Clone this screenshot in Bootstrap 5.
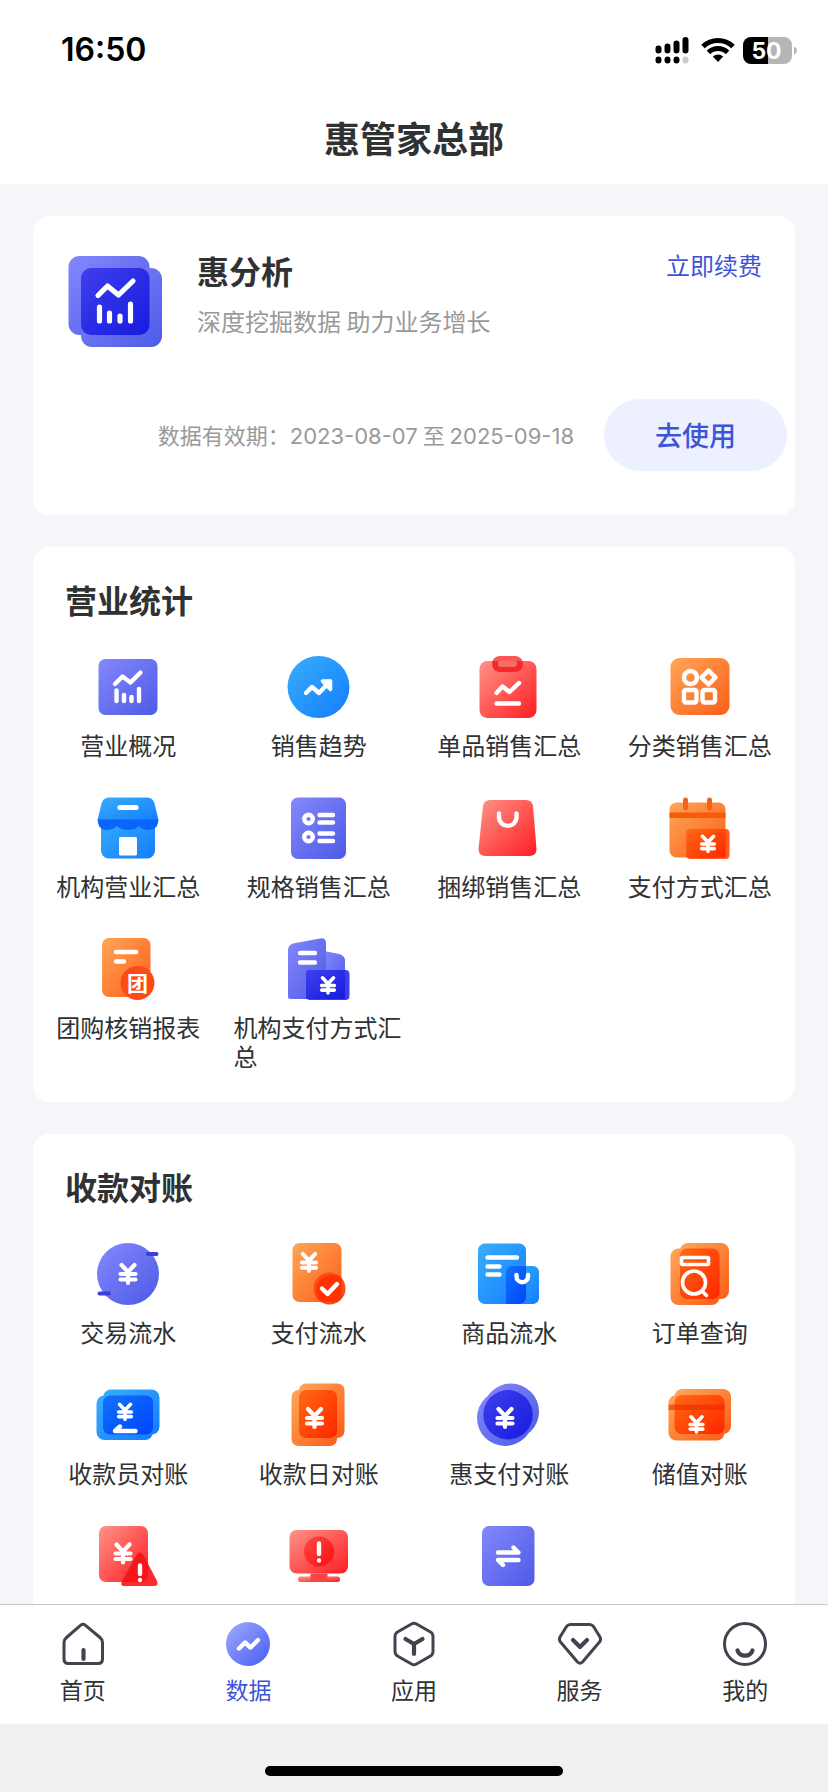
<!DOCTYPE html>
<html lang="zh-CN">
<head>
<meta charset="utf-8">
<meta name="viewport" content="width=device-width, initial-scale=1">
<title>惠管家总部</title>
<link rel="stylesheet" href="https://cdn.jsdelivr.net/npm/bootstrap@5.3.0/dist/css/bootstrap.min.css">
<style>
  :root { --brand: #3f55d8; --ink: #303133; --muted: #999; --page: #f5f6fa; }
  body { font-family: "Noto Sans CJK SC", sans-serif; color: var(--ink); background: var(--page); font-size: 24px; line-height: 29px; }
  a { color: inherit; text-decoration: none; }
  .status-bar { padding: 32px 31px 32px 61px; font-family: Inter, sans-serif; }
  .clock { font-size: 32px; line-height: 36px; font-weight: 600; color: #000; }
  .page-title { font-size: 36px; line-height: 44px; padding: 15px 0 25px; }
  .scroller { min-height: 0; gap: 32px; padding: 32px 33px; scrollbar-width: none; }
  .scroller::-webkit-scrollbar { display: none; }
  .panel { flex: none; background: #fff; border-radius: 16px; }
  .panel-title { font-size: 32px; line-height: 40px; }
  .promo { padding: 34px 8px 44px 35px; }
  .promo-top { gap: 35px; padding-right: 25px; }
  .promo-logo { width: 94px; height: 91px; margin-top: 6px; }
  .promo-sub { line-height: 36px; margin-top: 13px; color: var(--muted); }
  .promo-link, .promo-link:hover { color: var(--brand); line-height: 30px; }
  .promo-foot { gap: 30px; margin-top: 52px; }
  .validity { font-size: 22px; line-height: 30px; color: var(--muted); white-space: nowrap; }
  .validity time { font-family: Inter, sans-serif; }
  .btn-use { --bs-btn-bg: #ecf0ff; --bs-btn-color: var(--brand); --bs-btn-hover-bg: #dfe6ff; --bs-btn-hover-color: var(--brand);
    font-size: 27px; line-height: 40px; font-weight: 500; padding: 16px 51px; }
  .menu-panel { padding: 32px 0; }
  .menu-panel .panel-title { padding-left: 32px; margin-bottom: 36px; }
  .menu-grid { row-gap: 37px; }
  .menu-item { gap: 11px; padding: 0 10px; }
  .menu-item svg { width: 64px; height: 64px; flex: none; }
  .tab-bar { background: #fff; border-top: 1px solid #c8c8cb; padding: 15px 0 20px; font-size: 23px; line-height: 30px; }
  .tab-item { gap: 6px; }
  .tab-item.active { color: var(--brand); }
  .tab-item svg { width: 48px; height: 48px; }
  .home-area { background: #f1f1f1; padding: 42px 0 16px; }
  .home-pill { width: 36%; height: 10px; border-radius: 5px; background: #000; }
  .w { fill: none; stroke: #fff; stroke-width: 4.4; stroke-linecap: round; stroke-linejoin: round; }
  .w.thick { stroke-width: 5.2; }
  .w.thin { stroke-width: 3.6; }
  .wf { fill: #fff; }
  .line { fill: none; stroke: #43434f; stroke-width: 3; stroke-linecap: round; stroke-linejoin: round; }
  .line.thick { stroke-width: 4.2; }
</style>
</head>
<body class="vh-100 d-flex flex-column overflow-hidden">

<svg width="0" height="0" class="position-absolute" aria-hidden="true">
  <defs>
    <linearGradient id="pu" x2="1" y2="1"><stop stop-color="#8588fc"/><stop offset="1" stop-color="#4c5ae6"/></linearGradient>
    <linearGradient id="bl" x2="1" y2="1"><stop stop-color="#38aefb"/><stop offset="1" stop-color="#147dfe"/></linearGradient>
    <linearGradient id="re" x2="1" y2="1"><stop stop-color="#ff9388"/><stop offset="1" stop-color="#fe1d22"/></linearGradient>
    <linearGradient id="or" x2="1" y2="1"><stop stop-color="#ffa657"/><stop offset="1" stop-color="#fb5e18"/></linearGradient>
    <linearGradient id="dpu" x2="1" y2="1"><stop stop-color="#3f3fec"/><stop offset="1" stop-color="#161be0"/></linearGradient>
    <linearGradient id="dbl" x2="1" y2="1"><stop stop-color="#1273fb"/><stop offset="1" stop-color="#0043fe"/></linearGradient>
    <linearGradient id="dre" x2="1" y2="1"><stop stop-color="#fe4a46"/><stop offset="1" stop-color="#fc0c10"/></linearGradient>
    <linearGradient id="dor" x2="1" y2="1"><stop stop-color="#ff6a14"/><stop offset="1" stop-color="#ff2600"/></linearGradient>
    <linearGradient id="tab" x2="1" y2="1"><stop stop-color="#a0abff"/><stop offset="1" stop-color="#465cf2"/></linearGradient>
    <g id="yen" fill="none" stroke="#fff" stroke-width="4.2" stroke-linecap="round" stroke-linejoin="round">
      <path d="M-6.500-8.500 0-1.500 6.500-8.500M0-1V9.500M-7.500.5h15M-7.500 6h15"/>
    </g>
  </defs>
</svg>

<header class="bg-white">
  <div class="status-bar d-flex justify-content-between align-items-center">
    <span class="clock">16:50</span>
    <svg width="142" height="28" viewBox="0 0 142 28" aria-hidden="true">
      <g stroke="#000" stroke-width="6" stroke-linecap="round">
        <path d="M3.500 12.500v2M12.500 10.500v4M21.500 7.500v7M30.500 4v10.500M3.500 23.500v1M12.500 23.500v1M21.500 23.500v1"/>
        <path d="M30.500 23.500v1" stroke="#ccc"/>
      </g>
      <g fill="none" stroke="#000" stroke-width="5">
        <path d="M48 10.500a21.500 21.500 0 0 1 30 0"/>
        <path d="M53.500 16.500a13.500 13.500 0 0 1 19 0"/>
      </g>
      <path d="M57.800 20.500a7.500 7.500 0 0 1 10.400 0L63 26z"/>
      <path d="M96 1h17v27H96a8 8 0 0 1-8-8V9a8 8 0 0 1 8-8z"/>
      <path d="M113 1h16a8 8 0 0 1 8 8v11a8 8 0 0 1-8 8h-16zM139 10.500q3 1.500 3 4t-3 4z" fill="#b5b5b5"/>
      <text x="111.500" y="23" text-anchor="middle" font-size="23" font-weight="700" fill="#fff">50</text>
    </svg>
  </div>
  <h1 class="page-title fw-bold text-center m-0">惠管家总部</h1>
</header>

<main class="scroller flex-fill overflow-auto d-flex flex-column">

  <section class="panel promo">
    <div class="promo-top d-flex align-items-start">
      <svg class="promo-logo flex-shrink-0" viewBox="0 0 94 91" aria-hidden="true">
        <rect x=".5" width="81" height="79" rx="11" fill="url(#pu)"/>
        <rect x="13" y="12" width="81" height="79" rx="11" fill="url(#pu)"/>
        <rect x="13" y="12" width="68.500" height="67" rx="10" fill="url(#dpu)"/>
        <path class="w thick" d="M30 39.500 39.500 30 50.500 39 65 25M31.500 51v14M41.500 57v8M52 60v5M62.500 48v17"/>
      </svg>
      <div class="flex-fill">
        <h2 class="panel-title fw-bold m-0">惠分析</h2>
        <p class="promo-sub mb-0">深度挖掘数据 助力业务增长</p>
      </div>
      <a class="promo-link" href="#renew">立即续费</a>
    </div>
    <div class="promo-foot d-flex justify-content-end align-items-center">
      <span class="validity">数据有效期：<time>2023-08-07</time> 至 <time>2025-09-18</time></span>
      <button type="button" class="btn btn-use rounded-pill border-0">去使用</button>
    </div>
  </section>

  <section class="panel menu-panel">
    <h2 class="panel-title fw-bold">营业统计</h2>
    <div class="menu-grid row row-cols-4 gx-0">
      <a href="#m1" class="menu-item col d-flex flex-column align-items-center">
        <svg viewBox="0 0 64 64" aria-hidden="true"><rect x="2.500" y="4" width="59" height="56" rx="7" fill="url(#pu)"/><path class="w" d="M19 29 26.500 21.500 34.500 27.500 44.500 17.500M20.500 35.500V46M28 40v6M35.500 42v4M43 34v12"/></svg>
        <span>营业概况</span></a>
      <a href="#m2" class="menu-item col d-flex flex-column align-items-center">
        <svg viewBox="0 0 64 64" aria-hidden="true"><circle cx="31.500" cy="32" r="31" fill="url(#bl)"/><path class="w" d="M19 38 25 32 32 38 43 26.500"/><path d="M35.500 26H43.500V34.500z" fill="#fff" stroke="#fff" stroke-width="3.600" stroke-linejoin="round"/></svg>
        <span>销售趋势</span></a>
      <a href="#m3" class="menu-item col d-flex flex-column align-items-center">
        <svg viewBox="0 0 64 64" aria-hidden="true"><rect x="2.500" y="6" width="57" height="57" rx="8" fill="url(#re)"/><path d="M23 1h15a8 8 0 0 1 0 16H23a8 8 0 0 1 0-16z" fill="#fa5752"/><path d="M15.500 6h30q2 11-8 11H23Q14 16 15.500 6z" fill="#f22c2e"/><rect x="21" y="5.500" width="19" height="6.500" rx="3" fill="#fa6b65"/><path class="w" d="M19.500 38 25.500 31.500 32.500 37 42 28M19.500 48.500H42"/></svg>
        <span>单品销售汇总</span></a>
      <a href="#m4" class="menu-item col d-flex flex-column align-items-center">
        <svg viewBox="0 0 64 64" aria-hidden="true"><rect x="2.500" y="3" width="59" height="57" rx="9" fill="url(#or)"/><g class="w"><circle cx="22.500" cy="22.500" r="6.500"/><path d="M40.500 15.500 47.500 22.500 40.500 29.500 33.500 22.500z"/><rect x="16" y="35" width="12.500" height="12.500" rx="2"/><rect x="34.500" y="35" width="12.500" height="12.500" rx="2"/></g></svg>
        <span>分类销售汇总</span></a>

      <a href="#m5" class="menu-item col d-flex flex-column align-items-center">
        <svg viewBox="0 0 64 64" aria-hidden="true"><path d="M5 20h54v34a8 8 0 0 1-8 8.500H13A8 8 0 0 1 5 54z" fill="url(#bl)"/><path d="M13 1.500h38q6 0 7.500 6L62.500 24H1.500L5.500 7.500q1.500-6 7.500-6z" fill="url(#bl)"/><path d="M1.500 23.500h61Q62 34 53.500 34 47 34 43 30q-4 4-11 4t-11-4q-4 4-11 4Q2 34 1.500 23.500z" fill="#0866fd"/><path class="w thick" d="M24 11.500H40"/><rect class="wf" x="23" y="41" width="18" height="18.500" rx="1.500"/></svg>
        <span>机构营业汇总</span></a>
      <a href="#m6" class="menu-item col d-flex flex-column align-items-center">
        <svg viewBox="0 0 64 64" aria-hidden="true"><rect x="4" y="1.500" width="55" height="61.500" rx="7" fill="url(#pu)"/><g class="w"><circle cx="21.500" cy="23" r="4.300"/><circle cx="21.500" cy="41" r="4.300"/><path d="M32.500 19H46M32.500 26.500H46M32.500 37.500H46M32.500 45H46"/></g></svg>
        <span>规格销售汇总</span></a>
      <a href="#m7" class="menu-item col d-flex flex-column align-items-center">
        <svg viewBox="0 0 64 64" aria-hidden="true"><path d="M13 4H49q6 0 7 6l3.500 43q0 7-7 7H8.500q-7 0-7-7L6 10Q7 4 13 4z" fill="url(#re)"/><path class="w" d="M22 17.500v4.500a8.800 8.800 0 0 0 17.500 0V17.500"/></svg>
        <span>捆绑销售汇总</span></a>
      <a href="#m8" class="menu-item col d-flex flex-column align-items-center">
        <svg viewBox="0 0 64 64" aria-hidden="true"><rect x="1.500" y="6.500" width="56" height="55" rx="7" fill="url(#or)"/><path fill="#f75a0a" d="M1.500 16.500h56v5.500h-56z"/><path d="M17.500 4v8M41.500 4v8" stroke="#f6621d" stroke-width="5" stroke-linecap="round"/><rect x="18.500" y="33" width="43" height="30" rx="4" fill="#ff5a1f"/><path d="M22.500 33h35v28.500h-39V37a4 4 0 0 1 4-4z" fill="url(#dor)"/><use href="#yen" transform="translate(40 47.500) scale(.85)"/></svg>
        <span>支付方式汇总</span></a>

      <a href="#m9" class="menu-item col d-flex flex-column align-items-center">
        <svg viewBox="0 0 64 64" aria-hidden="true"><rect x="6" y="1" width="48.500" height="59" rx="7" fill="url(#or)"/><circle cx="41.500" cy="46" r="17" fill="#fd4b17"/><path class="w" d="M20 15H40M20 24.500H28"/><text x="41.500" y="53.500" text-anchor="middle" font-size="21" font-weight="700" fill="#fff">团</text></svg>
        <span>团购核销报表</span></a>
      <a href="#m10" class="menu-item col d-flex flex-column align-items-center">
        <svg viewBox="0 0 64 64" aria-hidden="true"><path d="M37 14 52 17q6 1.500 6 7V62H37z" fill="url(#pu)"/><path d="M1 13q0-5 5-6.500L33 1.500q6-1 6 5V62H3q-2 0-2-2z" fill="url(#pu)"/><rect x="19" y="33" width="43.500" height="30" rx="4" fill="#3d41e2"/><path d="M23 33H58V62H19V37a4 4 0 0 1 4-4z" fill="url(#dpu)"/><path class="w" d="M13 16H28M13 25.500H28"/><use href="#yen" transform="translate(41 48) scale(.85)"/></svg>
        <span>机构支付方式汇总</span></a>
    </div>
  </section>

  <section class="panel menu-panel">
    <h2 class="panel-title fw-bold">收款对账</h2>
    <div class="menu-grid row row-cols-4 gx-0">
      <a href="#r1" class="menu-item col d-flex flex-column align-items-center">
        <svg viewBox="0 0 64 64" aria-hidden="true"><circle cx="32" cy="32" r="31" fill="url(#pu)"/><path d="M52 12h8.500M3.500 51.500H13" stroke="#3a3fd9" stroke-width="4" stroke-linecap="round"/><use href="#yen" transform="translate(32 31.500)"/></svg>
        <span>交易流水</span></a>
      <a href="#r2" class="menu-item col d-flex flex-column align-items-center">
        <svg viewBox="0 0 64 64" aria-hidden="true"><rect x="5.500" y="1" width="49" height="59" rx="7" fill="url(#or)"/><circle cx="42.500" cy="46.500" r="16" fill="#fe4a1c"/><path d="M54.500 36V53a7 7 0 0 1-7 7H33.500A16 16 0 0 1 54.500 36z" fill="#ff3300"/><use href="#yen" transform="translate(22 20) scale(.95)"/><path class="w" d="M35 46.500 40.500 52 50 42"/></svg>
        <span>支付流水</span></a>
      <a href="#r3" class="menu-item col d-flex flex-column align-items-center">
        <svg viewBox="0 0 64 64" aria-hidden="true"><rect x="1" y="1.500" width="48" height="60.500" rx="7" fill="url(#bl)"/><rect x="29" y="24" width="33" height="38" rx="6" fill="url(#bl)"/><path d="M35 24H49V55a7 7 0 0 1-7 7H29V30a6 6 0 0 1 6-6z" fill="url(#dbl)"/><path class="w" d="M10.500 15.500H40M10.500 24.500H22.500M10.500 32.500H22.500M39.500 33v1.500a5.700 5.700 0 0 0 11.500 0V33"/></svg>
        <span>商品流水</span></a>
      <a href="#r4" class="menu-item col d-flex flex-column align-items-center">
        <svg viewBox="0 0 64 64" aria-hidden="true"><rect x="12" y="1" width="49" height="56" rx="8" fill="url(#or)"/><rect x="2.500" y="6.500" width="49" height="56.500" rx="8" fill="url(#or)"/><rect x="12" y="6.500" width="39.500" height="50.500" rx="7" fill="url(#dor)"/><g class="w thin"><rect x="13.500" y="15.500" width="27" height="7" rx="1"/><circle cx="26" cy="40.500" r="11.500"/><path d="M34 49 38.500 53.500"/></g></svg>
        <span>订单查询</span></a>

      <a href="#r5" class="menu-item col d-flex flex-column align-items-center">
        <svg viewBox="0 0 64 64" aria-hidden="true"><rect x="7" y="6.500" width="56.500" height="45" rx="8" fill="url(#bl)"/><rect x=".5" y="12.500" width="56.500" height="44.500" rx="8" fill="url(#bl)"/><rect x="7" y="12.500" width="50" height="39" rx="7" fill="url(#dbl)"/><use href="#yen" transform="translate(29 28.500) scale(.85)"/><path class="w" d="M39.500 48H19L24 43.500"/></svg>
        <span>收款员对账</span></a>
      <a href="#r6" class="menu-item col d-flex flex-column align-items-center">
        <svg viewBox="0 0 64 64" aria-hidden="true"><rect x="12" y=".5" width="45.500" height="54.500" rx="7" fill="url(#or)"/><rect x="4.500" y="7" width="45.500" height="56" rx="7" fill="url(#or)"/><rect x="12" y="7" width="38" height="48" rx="7" fill="url(#dor)"/><use href="#yen" transform="translate(27.500 34.500)"/></svg>
        <span>收款日对账</span></a>
      <a href="#r7" class="menu-item col d-flex flex-column align-items-center">
        <svg viewBox="0 0 64 64" aria-hidden="true"><circle cx="34" cy="28.500" r="28" fill="url(#pu)"/><circle cx="28" cy="35" r="28" fill="url(#pu)"/><circle cx="31" cy="31.700" r="24.700" fill="url(#dpu)"/><use href="#yen" transform="translate(28 34.500)"/></svg>
        <span>惠支付对账</span></a>
      <a href="#r8" class="menu-item col d-flex flex-column align-items-center">
        <svg viewBox="0 0 64 64" aria-hidden="true"><rect x="6.500" y="6" width="56.500" height="45" rx="8" fill="url(#or)"/><rect x=".5" y="12" width="56" height="45.500" rx="8" fill="url(#or)"/><rect x="6.500" y="12" width="50" height="39" rx="7" fill="url(#dor)"/><path fill="#ee2400" fill-opacity=".55" d="M.5 21.500h56V27H.5z"/><use href="#yen" transform="translate(28.500 41) scale(.85)"/></svg>
        <span>储值对账</span></a>

      <a href="#r9" class="menu-item col d-flex flex-column align-items-center" aria-label="异常对账">
        <svg viewBox="0 0 64 64" aria-hidden="true"><rect x="3" y="2" width="49" height="56" rx="7" fill="url(#re)"/><path d="M40.500 31q3.500-5 7 0L61 57q2 5-3 5H28.500q-5 0-2.500-5z" fill="#fb2b30"/><path d="M40.500 31q3.500-5 7 0L52 39.500V51a7 7 0 0 1-7 7H26z" fill="#f81519"/><use href="#yen" transform="translate(27 29)"/><path class="w" d="M44 41.500V50M44 56v.1"/></svg></a>
      <a href="#r10" class="menu-item col d-flex flex-column align-items-center" aria-label="异常监控">
        <svg viewBox="0 0 64 64" aria-hidden="true"><rect x="2.500" y="6" width="58.500" height="43.500" rx="7" fill="url(#re)"/><rect x="11" y="52.500" width="42" height="5.500" rx="2.500" fill="url(#re)"/><path fill="#fa4444" d="M23.500 49.500h17V58h-17z"/><circle cx="32" cy="27.500" r="15" fill="url(#dre)"/><path class="w" d="M32 19.500V30M32 36.500v.1"/></svg></a>
      <a href="#r11" class="menu-item col d-flex flex-column align-items-center" aria-label="流水对账">
        <svg viewBox="0 0 64 64" aria-hidden="true"><rect x="5" y="2" width="52.500" height="60" rx="7" fill="url(#pu)"/><path class="w" d="M21 28.500H41.500L36.500 23.500M41.500 36H21L26 41"/></svg></a>
    </div>
  </section>
</main>

<nav class="tab-bar d-flex" aria-label="主导航">
  <a href="#home" class="tab-item flex-fill w-100 d-flex flex-column align-items-center">
    <svg viewBox="0 0 48 48" aria-hidden="true"><path class="line" d="M21.500 5.300q2.500-2 5 0L41 17.500q2.500 2 2.500 5V39q0 4.500-4.500 4.500H9.500Q5 43.500 5 39V22.500q0-3 2.500-5z"/><path class="line thick" d="M24.500 30v9"/></svg>
    <span>首页</span></a>
  <a href="#data" class="tab-item active flex-fill w-100 d-flex flex-column align-items-center" aria-current="page">
    <svg viewBox="0 0 48 48" aria-hidden="true"><circle cx="24" cy="24" r="22" fill="url(#tab)"/><path class="w" d="M15 28.500 21 22.500 26.500 27.500 34 20"/></svg>
    <span>数据</span></a>
  <a href="#apps" class="tab-item flex-fill w-100 d-flex flex-column align-items-center">
    <svg viewBox="0 0 48 48" aria-hidden="true"><path class="line" d="M21.500 4q2.500-1.500 5 0L40.500 12q2.500 1.500 2.500 4.500V31.500q0 3-2.500 4.500L26.500 44q-2.500 1.500-5 0L7.500 36Q5 34.500 5 31.500V16.500Q5 13.500 7.500 12z"/><path class="line thick" d="M15.500 19 24 24 32.500 19M24 24v10"/></svg>
    <span>应用</span></a>
  <a href="#service" class="tab-item flex-fill w-100 d-flex flex-column align-items-center">
    <svg viewBox="0 0 48 48" aria-hidden="true"><path class="line" d="M14.500 4.500H33.500q2.500 0 4 2L44 17q1.500 2.500-.5 5L26.500 42q-2.500 2.500-5 0L4.500 22Q2.500 19.500 4 17L10.500 6.500q1.500-2 4-2z"/><path class="line thick" d="M17 20 24 27 31 20"/></svg>
    <span>服务</span></a>
  <a href="#me" class="tab-item flex-fill w-100 d-flex flex-column align-items-center">
    <svg viewBox="0 0 48 48" aria-hidden="true"><circle class="line" cx="24" cy="24" r="20.500"/><path class="line thick" d="M16.500 30.500a8 8 0 0 0 15 0"/></svg>
    <span>我的</span></a>
</nav>
<div class="home-area d-flex justify-content-center"><div class="home-pill"></div></div>

<script src="https://cdn.jsdelivr.net/npm/bootstrap@5.3.0/dist/js/bootstrap.bundle.min.js"></script>
</body>
</html>
